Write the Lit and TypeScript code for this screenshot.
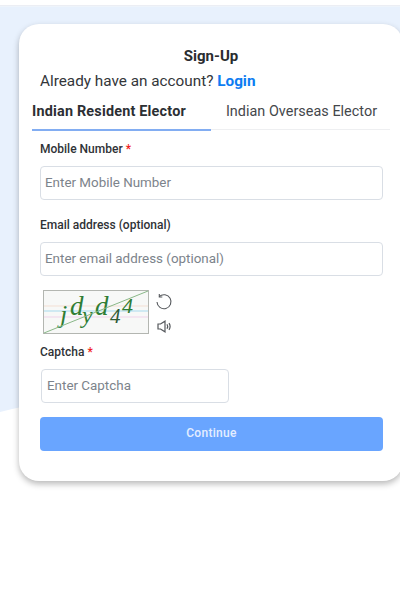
import { LitElement, html, css } from "lit";
import { customElement } from "lit/decorators.js";

@customElement("app-root")
export class AppRoot extends LitElement {
  static styles = css`
    :host { display: block; width: 400px; height: 600px; position: relative; overflow: hidden; background: #fff; font-family: Roboto, "Liberation Sans", sans-serif; color: #212529; }
    .bg { position: absolute; left: 0; top: 0; width: 400px; height: 420px; }
    .page { position: relative; padding: 24px 0 0 19px; }
    .card { box-sizing: border-box; width: 384px; height: 457px; background: #fff; border-radius: 20px; box-shadow: 0 3px 6px rgba(0,0,0,.28); padding: 22px 10px 0 13px; display: flex; flex-direction: column; }
    h1 { margin: 0; font-size: 15px; line-height: 20px; font-weight: 700; text-align: center; padding-right: 3px; color: #2a2c2f; }
    .account { margin: 5px 0 0 8px; font-size: 15.3px; line-height: 20px; color: #33363a; }
    .account b { color: #0d7cf2; font-weight: 700; }
    .tabs { display: flex; width: 358px; margin-top: 1px; height: 38px; border-bottom: 1px solid #eeeff1; box-sizing: border-box; }
    .tab { width: 179px; box-sizing: border-box; font-size: 14.4px; line-height: 20px; padding: 10px 0 0 2px; white-space: nowrap; color: #44474b; text-align: center; letter-spacing: .03px; }
    .tab.on { color: #2c2f33; font-weight: 700; text-align: left; border-bottom: 2px solid #82adf2; height: 39px; letter-spacing: .2px; padding-left: 0; }
    .fields { padding-left: 8px; display: flex; flex-direction: column; }
    label { display: block; font-size: 12px; line-height: 16px; font-weight: 500; color: #2f3236; }
    label i { color: #f01c1c; font-style: normal; font-size: 12px; margin-left: 3px; }
    .field { box-sizing: border-box; width: 343px; height: 34px; margin-top: 9px; border: 1px solid #d9dee5; border-radius: 4px; padding: 0 4px; font-size: 13.4px; line-height: 31px; color: #7c838b; background: #fff; white-space: nowrap; }
    .l1 { margin-top: 11px; }
    .l2 { margin-top: 17px; }
    .cap { display: flex; margin: 14px 0 0 3px; gap: 6px; }
    .cap-img { display: block; }
    .icons { display: flex; flex-direction: column; align-items: center; gap: 9px; padding-top: 3px; width: 18px; }
    .icons svg { display: block; }
    .l3 { margin-top: 10px; }
    .small { width: 188px; margin-left: 1px; padding: 0 5px; }
    .btn { box-sizing: border-box; width: 343px; height: 34px; margin-top: 14px; background: #69a5ff; border-radius: 4px; color: #e4eeff; font-size: 12px; font-weight: 500; text-align: center; line-height: 33px; letter-spacing: .3px; }
  `;
  render() {
    return html`
      <svg class="bg" viewBox="0 0 400 420">
        <rect y="5" width="400" height="1.5" fill="#eceef4"></rect>
        <path d="M0 6.5H400V380C300 380 200 380 100 392C60 397 30 405 0 412Z" fill="#e8f1fd"></path>
      </svg>
      <div class="page">
        <div class="card">
          <h1>Sign-Up</h1>
          <div class="account">Already have an account? <b>Login</b></div>
          <div class="tabs">
            <div class="tab on">Indian Resident Elector</div>
            <div class="tab">Indian Overseas Elector</div>
          </div>
          <div class="fields">
            <label class="l1">Mobile Number<i>*</i></label>
            <div class="field">Enter Mobile Number</div>
            <label class="l2">Email address (optional)</label>
            <div class="field">Enter email address (optional)</div>
            <div class="cap">
              <svg class="cap-img" width="106" height="44" viewBox="0 0 106 44">
                <rect x=".5" y=".5" width="105" height="43" fill="#f7f8f7" stroke="#b3b6b1"></rect>
                <path d="M1 16H105" stroke="#f3dfd3"></path>
                <path d="M1 21H105" stroke="#cfe9f2" stroke-width="2"></path>
                <path d="M1 27H105" stroke="#efd3ea"></path>
                <g font-family="'Liberation Serif', serif" font-style="italic" fill="#2f7d34">
                  <text x="17" y="33" font-size="26">j</text>
                  <text x="27" y="25" font-size="27">d</text>
                  <text x="39" y="33" font-size="24">y</text>
                  <text x="52" y="25" font-size="27">d</text>
                  <text x="67" y="33" font-size="21" fill="#2e5a35">4</text>
                  <text x="79" y="23" font-size="22">4</text>
                </g>
                <path d="M1 43L105 1" stroke="#8ab889" stroke-width="1"></path>
              </svg>
              <div class="icons">
                <svg width="18" height="18" viewBox="0 0 18 18" fill="none" stroke="#55585c" stroke-width="1.1">
                  <path d="M4.2 3.6A7 7 0 1 1 2 9"></path>
                  <path d="M4.3 1v3h3"></path>
                </svg>
                <svg width="14" height="13" viewBox="0 0 14 13" fill="none" stroke="#55585c" stroke-width="1.2">
                  <path d="M1 4H3.5L8 1.2V11.8L3.5 9H1Z"></path>
                  <path d="M10 4.2C10.8 5.5 10.8 7.5 10 8.8"></path>
                  <path d="M12 3.2C13.2 5 13.2 8 12 9.8"></path>
                </svg>
              </div>
            </div>
            <label class="l3">Captcha<i>*</i></label>
            <div class="field small">Enter Captcha</div>
            <div class="btn">Continue</div>
          </div>
        </div>
      </div>
    `;
  }
}
